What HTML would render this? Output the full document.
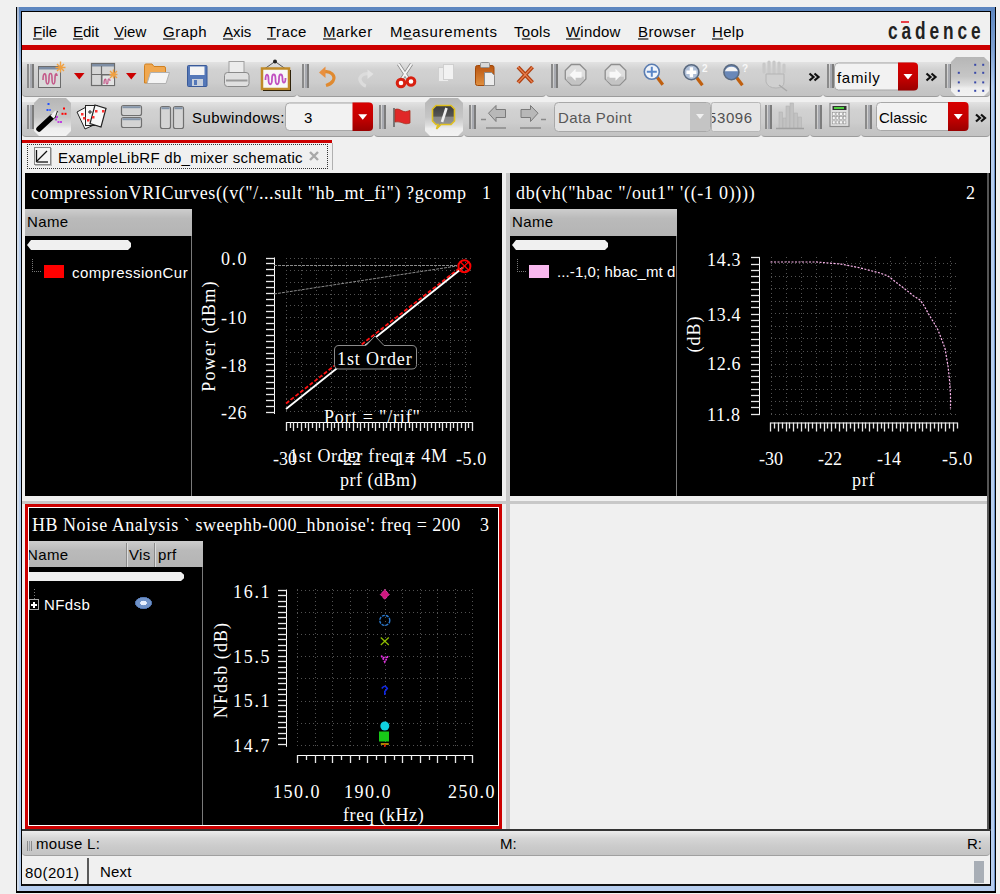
<!DOCTYPE html>
<html><head><meta charset="utf-8"><style>
html,body{margin:0;padding:0}
body{width:1000px;height:894px;background:#f0f0f0;position:relative;overflow:hidden}
div,span,svg{position:absolute}
.s{font-family:"Liberation Sans",sans-serif;white-space:pre}
.f{font-family:"Liberation Serif",serif;white-space:pre}
u{text-decoration:underline;text-decoration-color:#6a6a6a;text-underline-offset:1px;text-decoration-thickness:1.5px}
</style></head><body>
<div style="left:16px;top:7px;width:980px;height:886px;background:#000;"></div>
<div style="left:17px;top:7px;width:978px;height:884px;background:linear-gradient(#5b85bf 0px,#7fa2d2 40px,#b6cdee 80px,#b6cdee 100%);"></div>
<div style="left:17px;top:7px;width:2px;height:884px;background:linear-gradient(#a8b8d0 0px,#d0dae6 60px);"></div>
<div style="left:994px;top:40px;width:1px;height:851px;background:#6a90c8;"></div>
<div style="left:21px;top:11px;width:970px;height:875px;background:#000;"></div>
<div style="left:22px;top:12px;width:968px;height:873px;background:#f0f0f0;"></div>
<span class="s" style="left:33px;top:24px;font-size:15px;line-height:15px;"><u>F</u>ile</span>
<span class="s" style="left:73px;top:24px;font-size:15px;line-height:15px;"><u>E</u>dit</span>
<span class="s" style="left:114px;top:24px;font-size:15px;line-height:15px;"><u>V</u>iew</span>
<span class="s" style="left:163px;top:24px;font-size:15px;line-height:15px;letter-spacing:0.5px;"><u>G</u>raph</span>
<span class="s" style="left:223px;top:24px;font-size:15px;line-height:15px;"><u>A</u>xis</span>
<span class="s" style="left:267px;top:24px;font-size:15px;line-height:15px;letter-spacing:0.4px;"><u>T</u>race</span>
<span class="s" style="left:323px;top:24px;font-size:15px;line-height:15px;letter-spacing:0.5px;"><u>M</u>arker</span>
<span class="s" style="left:390px;top:24px;font-size:15px;line-height:15px;letter-spacing:0.7px;">M<u>e</u>asurements</span>
<span class="s" style="left:514px;top:24px;font-size:15px;line-height:15px;letter-spacing:0.3px;">T<u>o</u>ols</span>
<span class="s" style="left:566px;top:24px;font-size:15px;line-height:15px;letter-spacing:0.2px;"><u>W</u>indow</span>
<span class="s" style="left:638px;top:24px;font-size:15px;line-height:15px;letter-spacing:0.4px;"><u>B</u>rowser</span>
<span class="s" style="left:712px;top:24px;font-size:15px;line-height:15px;letter-spacing:0.3px;"><u>H</u>elp</span>
<div style="left:22px;top:45px;width:968px;height:5px;background:#cc0000;"></div>
<span class="s" style="left:888px;top:19px;font-size:24px;line-height:24px;font-weight:bold;letter-spacing:5.4px;color:#222;transform:scaleX(0.72);transform-origin:0 0;">cadence</span>
<div style="left:901px;top:21px;width:8px;height:1.5px;background:#e8404a;"></div>
<div style="left:22px;top:62px;width:275px;height:35px;background:linear-gradient(#e2e2e2 0%,#d2d2d2 22%,#cdcdcd 60%,#c6c6c6 78%,#c3c3c3 100%);border-bottom:1px solid #9c9c9c;box-sizing:border-box;border-radius:0 0 4px 4px;"></div>
<div style="left:297px;top:62px;width:249px;height:35px;background:linear-gradient(#e2e2e2 0%,#d2d2d2 22%,#cdcdcd 60%,#c6c6c6 78%,#c3c3c3 100%);border-bottom:1px solid #9c9c9c;box-sizing:border-box;border-radius:0 0 4px 4px;"></div>
<div style="left:546px;top:62px;width:277px;height:35px;background:linear-gradient(#e2e2e2 0%,#d2d2d2 22%,#cdcdcd 60%,#c6c6c6 78%,#c3c3c3 100%);border-bottom:1px solid #9c9c9c;box-sizing:border-box;border-radius:0 0 4px 4px;"></div>
<div style="left:823px;top:62px;width:117px;height:35px;background:linear-gradient(#e2e2e2 0%,#d2d2d2 22%,#cdcdcd 60%,#c6c6c6 78%,#c3c3c3 100%);border-bottom:1px solid #9c9c9c;box-sizing:border-box;border-radius:0 0 4px 4px;"></div>
<div style="left:940px;top:62px;width:50px;height:35px;background:linear-gradient(#e2e2e2 0%,#d2d2d2 22%,#cdcdcd 60%,#c6c6c6 78%,#c3c3c3 100%);border-bottom:1px solid #9c9c9c;box-sizing:border-box;border-radius:0 0 4px 4px;"></div>
<div style="left:27px;top:64px;width:2px;height:24px;background:#8a8a8a;"></div>
<div style="left:30px;top:64px;width:2px;height:24px;background:#a8aab0;"></div>
<div style="left:32px;top:64px;width:2px;height:24px;background:#7c7c7c;"></div>
<div style="left:302px;top:64px;width:2px;height:24px;background:#8a8a8a;"></div>
<div style="left:305px;top:64px;width:2px;height:24px;background:#a8aab0;"></div>
<div style="left:307px;top:64px;width:2px;height:24px;background:#7c7c7c;"></div>
<div style="left:551px;top:64px;width:2px;height:24px;background:#8a8a8a;"></div>
<div style="left:554px;top:64px;width:2px;height:24px;background:#a8aab0;"></div>
<div style="left:556px;top:64px;width:2px;height:24px;background:#7c7c7c;"></div>
<div style="left:827px;top:64px;width:2px;height:24px;background:#8a8a8a;"></div>
<div style="left:830px;top:64px;width:2px;height:24px;background:#a8aab0;"></div>
<div style="left:832px;top:64px;width:2px;height:24px;background:#7c7c7c;"></div>
<div style="left:945px;top:64px;width:2px;height:24px;background:#8a8a8a;"></div>
<div style="left:948px;top:64px;width:2px;height:24px;background:#a8aab0;"></div>
<div style="left:950px;top:64px;width:2px;height:24px;background:#7c7c7c;"></div>
<div style="left:22px;top:102px;width:352px;height:35px;background:linear-gradient(#e2e2e2 0%,#d2d2d2 22%,#cdcdcd 60%,#c6c6c6 78%,#c3c3c3 100%);border-bottom:1px solid #9c9c9c;box-sizing:border-box;border-radius:0 0 4px 4px;"></div>
<div style="left:374px;top:102px;width:90px;height:35px;background:linear-gradient(#e2e2e2 0%,#d2d2d2 22%,#cdcdcd 60%,#c6c6c6 78%,#c3c3c3 100%);border-bottom:1px solid #9c9c9c;box-sizing:border-box;border-radius:0 0 4px 4px;"></div>
<div style="left:464px;top:102px;width:297px;height:35px;background:linear-gradient(#e2e2e2 0%,#d2d2d2 22%,#cdcdcd 60%,#c6c6c6 78%,#c3c3c3 100%);border-bottom:1px solid #9c9c9c;box-sizing:border-box;border-radius:0 0 4px 4px;"></div>
<div style="left:761px;top:102px;width:49px;height:35px;background:linear-gradient(#e2e2e2 0%,#d2d2d2 22%,#cdcdcd 60%,#c6c6c6 78%,#c3c3c3 100%);border-bottom:1px solid #9c9c9c;box-sizing:border-box;border-radius:0 0 4px 4px;"></div>
<div style="left:810px;top:102px;width:51px;height:35px;background:linear-gradient(#e2e2e2 0%,#d2d2d2 22%,#cdcdcd 60%,#c6c6c6 78%,#c3c3c3 100%);border-bottom:1px solid #9c9c9c;box-sizing:border-box;border-radius:0 0 4px 4px;"></div>
<div style="left:861px;top:102px;width:129px;height:35px;background:linear-gradient(#e2e2e2 0%,#d2d2d2 22%,#cdcdcd 60%,#c6c6c6 78%,#c3c3c3 100%);border-bottom:1px solid #9c9c9c;box-sizing:border-box;border-radius:0 0 4px 4px;"></div>
<div style="left:27px;top:105px;width:2px;height:24px;background:#8a8a8a;"></div>
<div style="left:30px;top:105px;width:2px;height:24px;background:#a8aab0;"></div>
<div style="left:32px;top:105px;width:2px;height:24px;background:#7c7c7c;"></div>
<div style="left:379px;top:105px;width:2px;height:24px;background:#8a8a8a;"></div>
<div style="left:382px;top:105px;width:2px;height:24px;background:#a8aab0;"></div>
<div style="left:384px;top:105px;width:2px;height:24px;background:#7c7c7c;"></div>
<div style="left:469px;top:105px;width:2px;height:24px;background:#8a8a8a;"></div>
<div style="left:472px;top:105px;width:2px;height:24px;background:#a8aab0;"></div>
<div style="left:474px;top:105px;width:2px;height:24px;background:#7c7c7c;"></div>
<div style="left:765px;top:105px;width:2px;height:24px;background:#8a8a8a;"></div>
<div style="left:768px;top:105px;width:2px;height:24px;background:#a8aab0;"></div>
<div style="left:770px;top:105px;width:2px;height:24px;background:#7c7c7c;"></div>
<div style="left:815px;top:105px;width:2px;height:24px;background:#8a8a8a;"></div>
<div style="left:818px;top:105px;width:2px;height:24px;background:#a8aab0;"></div>
<div style="left:820px;top:105px;width:2px;height:24px;background:#7c7c7c;"></div>
<div style="left:865px;top:105px;width:2px;height:24px;background:#8a8a8a;"></div>
<div style="left:868px;top:105px;width:2px;height:24px;background:#a8aab0;"></div>
<div style="left:870px;top:105px;width:2px;height:24px;background:#7c7c7c;"></div>
<div style="left:22px;top:140px;width:310px;height:3px;background:#cc0000;"></div>
<div style="left:27px;top:144px;width:301px;height:25px;background:transparent;border:1px dotted #333;box-sizing:border-box;"></div>
<div style="left:332px;top:143px;width:1px;height:27px;background:#b0b0b0;"></div>
<span class="s" style="left:58px;top:150px;font-size:15px;line-height:15px;letter-spacing:0.29px;">ExampleLibRF db_mixer schematic</span>
<div style="left:22px;top:170px;width:968px;height:659px;background:#f0f0f0;"></div>
<div style="left:25px;top:173px;width:477px;height:323px;background:#000;"></div>
<div style="left:506px;top:173px;width:4px;height:656px;background:#c8c8c8;"></div>
<div style="left:510px;top:173px;width:477px;height:323px;background:#000;"></div>
<div style="left:987px;top:173px;width:2px;height:656px;background:#555;"></div>
<div style="left:989px;top:173px;width:2px;height:656px;background:#000;"></div>
<div style="left:22px;top:501px;width:965px;height:3px;background:#c8c8c8;"></div>
<div style="left:25px;top:504px;width:477px;height:325px;background:#cc0000;"></div>
<div style="left:28px;top:507px;width:471px;height:319px;background:#fff;"></div>
<div style="left:29px;top:508px;width:469px;height:317px;background:#000;"></div>
<div style="left:510px;top:504px;width:477px;height:325px;background:#f0f0f0;"></div>
<div style="left:22px;top:829px;width:969px;height:2px;background:#333;"></div>
<div style="left:22px;top:831px;width:968px;height:25px;background:linear-gradient(#ececec 0%,#d6d6d6 30%,#cccccc 60%,#c4c4c4 100%);border-bottom:1px solid #a0a0a0;box-sizing:border-box;border-radius:0 0 4px 4px;"></div>
<div style="left:27px;top:841px;width:1px;height:10px;background:#8a8a8a;"></div>
<div style="left:29px;top:841px;width:1px;height:10px;background:#9aa0a8;"></div>
<div style="left:31px;top:841px;width:1px;height:10px;background:#8a8a8a;"></div>
<span class="s" style="left:36px;top:836px;font-size:15px;line-height:15px;letter-spacing:0.3px;">mouse L:</span>
<span class="s" style="left:500px;top:836px;font-size:15px;line-height:15px;">M:</span>
<span class="s" style="left:967px;top:836px;font-size:15px;line-height:15px;">R:</span>
<div style="left:22px;top:856px;width:968px;height:29px;background:#f0f0f0;"></div>
<span class="s" style="left:25px;top:865px;font-size:15px;line-height:15px;letter-spacing:0.4px;">80(201)</span>
<div style="left:87px;top:858px;width:2px;height:26px;background:#5a5a5a;"></div>
<span class="s" style="left:100px;top:864px;font-size:15px;line-height:15px;letter-spacing:0.2px;">Next</span>
<div style="left:974px;top:861px;width:10px;height:22px;background:#a8aeb6;"></div>
<div style="left:22px;top:884px;width:969px;height:2px;background:#111;"></div>
<span class="f" style="left:31px;top:184px;font-size:18px;line-height:18px;color:#fff;letter-spacing:0.6px;">compressionVRICurves((v(&quot;/...sult &quot;hb_mt_fi&quot;) ?gcomp</span>
<span class="f" style="left:482px;top:184px;font-size:18px;line-height:18px;color:#fff;">1</span>
<div style="left:25px;top:209px;width:167px;height:27px;background:linear-gradient(#cdcdcd 0%,#bababa 35%,#b4b4b4 100%);"></div>
<span class="s" style="left:27px;top:214px;font-size:15px;line-height:15px;letter-spacing:0.4px;">Name</span>
<div style="left:191px;top:236px;width:1px;height:260px;background:#7a7a7a;"></div>
<div style="left:27px;top:240px;width:104px;height:10px;background:#f0f0f0;clip-path:polygon(0 50%,4px 0,calc(100% - 3px) 0,100% 30%,100% 70%,calc(100% - 3px) 100%,4px 100%);"></div>
<div style="left:32px;top:259px;width:1px;height:13px;background:repeating-linear-gradient(#777 0 1px,transparent 1px 2px);"></div>
<div style="left:32px;top:271px;width:10px;height:1px;background:repeating-linear-gradient(90deg,#777 0 1px,transparent 1px 2px);"></div>
<div style="left:44px;top:265px;width:20px;height:13px;background:#ff0000;"></div>
<span class="s" style="left:72px;top:265px;font-size:15px;line-height:15px;color:#fff;letter-spacing:0.5px;">compressionCur</span>
<span class="f" style="left:516px;top:184px;font-size:18px;line-height:18px;color:#fff;letter-spacing:0.7px;">db(vh(&quot;hbac &quot;/out1&quot; &#39;((-1 0))))</span>
<span class="f" style="left:966px;top:184px;font-size:18px;line-height:18px;color:#fff;">2</span>
<div style="left:510px;top:209px;width:167px;height:27px;background:linear-gradient(#cdcdcd 0%,#bababa 35%,#b4b4b4 100%);"></div>
<span class="s" style="left:512px;top:214px;font-size:15px;line-height:15px;letter-spacing:0.4px;">Name</span>
<div style="left:676px;top:236px;width:1px;height:260px;background:#7a7a7a;"></div>
<div style="left:512px;top:240px;width:96px;height:10px;background:#f0f0f0;clip-path:polygon(0 50%,4px 0,calc(100% - 3px) 0,100% 30%,100% 70%,calc(100% - 3px) 100%,4px 100%);"></div>
<div style="left:517px;top:259px;width:1px;height:13px;background:repeating-linear-gradient(#777 0 1px,transparent 1px 2px);"></div>
<div style="left:517px;top:271px;width:10px;height:1px;background:repeating-linear-gradient(90deg,#777 0 1px,transparent 1px 2px);"></div>
<div style="left:529px;top:265px;width:20px;height:13px;background:#f8b8ee;"></div>
<div style="left:510px;top:236px;width:166px;height:60px;overflow:hidden">
<span class="s" style="left:47px;top:28px;font-size:15px;line-height:15px;color:#fff;letter-spacing:0.1px;">...-1,0; hbac_mt d</span>
</div>
<span class="f" style="left:32px;top:516px;font-size:18px;line-height:18px;color:#fff;letter-spacing:0.52px;">HB Noise Analysis ` sweephb-000_hbnoise&#39;: freq = 200</span>
<span class="f" style="left:480px;top:516px;font-size:18px;line-height:18px;color:#fff;">3</span>
<div style="left:29px;top:541px;width:174px;height:26px;background:linear-gradient(#cdcdcd 0%,#bababa 35%,#b4b4b4 100%);"></div>
<div style="left:126px;top:543px;width:1px;height:24px;background:#8a8a8a;"></div>
<div style="left:127px;top:543px;width:1px;height:24px;background:#dcdcdc;"></div>
<div style="left:154px;top:543px;width:1px;height:24px;background:#8a8a8a;"></div>
<div style="left:155px;top:543px;width:1px;height:24px;background:#dcdcdc;"></div>
<div style="left:29px;top:541px;width:97px;height:26px;overflow:hidden">
<span class="s" style="left:-2px;top:6px;font-size:15px;line-height:15px;letter-spacing:0.4px;">Name</span>
</div>
<span class="s" style="left:129px;top:547px;font-size:15px;line-height:15px;letter-spacing:0.3px;">Vis</span>
<span class="s" style="left:158px;top:547px;font-size:15px;line-height:15px;letter-spacing:0.3px;">prf</span>
<div style="left:202px;top:567px;width:1px;height:258px;background:#7a7a7a;"></div>
<div style="left:29px;top:572px;width:155px;height:9px;background:#f0f0f0;clip-path:polygon(0 0,calc(100% - 3px) 0,100% 30%,100% 70%,calc(100% - 3px) 100%,0 100%);"></div>
<div style="left:34px;top:589px;width:1px;height:10px;background:repeating-linear-gradient(#777 0 1px,transparent 1px 3px);"></div>
<div style="left:29px;top:599px;width:10px;height:11px;background:transparent;border:1px solid #aaa;box-sizing:border-box;"></div>
<div style="left:31px;top:603.5px;width:6px;height:2.0px;background:#fff;"></div>
<div style="left:33px;top:601.5px;width:2px;height:6.0px;background:#fff;"></div>
<span class="s" style="left:44px;top:597px;font-size:15px;line-height:15px;color:#fff;letter-spacing:0.4px;">NFdsb</span>
<div style="left:135px;top:597px;width:17px;height:12px;background:radial-gradient(ellipse at center,#e8f0ff 0 25%,#6f92c8 30% 60%,#3e5f98 70%,transparent 72%);"></div>
<span class="s" style="left:702px;top:64px;font-size:10px;line-height:10px;color:#f8f8f8;font-weight:bold;">2</span>
<span class="s" style="left:742px;top:64px;font-size:10px;line-height:10px;color:#f8f8f8;font-weight:bold;">?</span>
<svg style="left:0;top:0" width="1000" height="894" viewBox="0 0 1000 894"><line x1="286.5" y1="258" x2="286.5" y2="414" stroke="#525252" stroke-width="1" stroke-dasharray="1 3"/><line x1="301.5" y1="258" x2="301.5" y2="414" stroke="#525252" stroke-width="1" stroke-dasharray="1 3"/><line x1="316.5" y1="258" x2="316.5" y2="414" stroke="#525252" stroke-width="1" stroke-dasharray="1 3"/><line x1="331.5" y1="258" x2="331.5" y2="414" stroke="#525252" stroke-width="1" stroke-dasharray="1 3"/><line x1="346.5" y1="258" x2="346.5" y2="414" stroke="#525252" stroke-width="1" stroke-dasharray="1 3"/><line x1="360.5" y1="258" x2="360.5" y2="414" stroke="#525252" stroke-width="1" stroke-dasharray="1 3"/><line x1="375.5" y1="258" x2="375.5" y2="414" stroke="#525252" stroke-width="1" stroke-dasharray="1 3"/><line x1="390.5" y1="258" x2="390.5" y2="414" stroke="#525252" stroke-width="1" stroke-dasharray="1 3"/><line x1="405.5" y1="258" x2="405.5" y2="414" stroke="#525252" stroke-width="1" stroke-dasharray="1 3"/><line x1="420.5" y1="258" x2="420.5" y2="414" stroke="#525252" stroke-width="1" stroke-dasharray="1 3"/><line x1="435.5" y1="258" x2="435.5" y2="414" stroke="#525252" stroke-width="1" stroke-dasharray="1 3"/><line x1="450.5" y1="258" x2="450.5" y2="414" stroke="#525252" stroke-width="1" stroke-dasharray="1 3"/><line x1="465.5" y1="258" x2="465.5" y2="414" stroke="#525252" stroke-width="1" stroke-dasharray="1 3"/><line x1="286" y1="258.5" x2="473" y2="258.5" stroke="#525252" stroke-width="1" stroke-dasharray="1 3"/><line x1="286" y1="270.5" x2="473" y2="270.5" stroke="#525252" stroke-width="1" stroke-dasharray="1 3"/><line x1="286" y1="282.5" x2="473" y2="282.5" stroke="#525252" stroke-width="1" stroke-dasharray="1 3"/><line x1="286" y1="294.5" x2="473" y2="294.5" stroke="#525252" stroke-width="1" stroke-dasharray="1 3"/><line x1="286" y1="305.5" x2="473" y2="305.5" stroke="#525252" stroke-width="1" stroke-dasharray="1 3"/><line x1="286" y1="317.5" x2="473" y2="317.5" stroke="#525252" stroke-width="1" stroke-dasharray="1 3"/><line x1="286" y1="329.5" x2="473" y2="329.5" stroke="#525252" stroke-width="1" stroke-dasharray="1 3"/><line x1="286" y1="340.5" x2="473" y2="340.5" stroke="#525252" stroke-width="1" stroke-dasharray="1 3"/><line x1="286" y1="352.5" x2="473" y2="352.5" stroke="#525252" stroke-width="1" stroke-dasharray="1 3"/><line x1="286" y1="364.5" x2="473" y2="364.5" stroke="#525252" stroke-width="1" stroke-dasharray="1 3"/><line x1="286" y1="376.5" x2="473" y2="376.5" stroke="#525252" stroke-width="1" stroke-dasharray="1 3"/><line x1="286" y1="387.5" x2="473" y2="387.5" stroke="#525252" stroke-width="1" stroke-dasharray="1 3"/><line x1="286" y1="399.5" x2="473" y2="399.5" stroke="#525252" stroke-width="1" stroke-dasharray="1 3"/><line x1="286" y1="411.5" x2="473" y2="411.5" stroke="#525252" stroke-width="1" stroke-dasharray="1 3"/><line x1="274.5" y1="257.5" x2="274.5" y2="414" stroke="#fff" stroke-width="1" /><line x1="266" y1="258.5" x2="275" y2="258.5" stroke="#e8e8e8" stroke-width="1.3" /><line x1="266" y1="263.5" x2="275" y2="263.5" stroke="#e8e8e8" stroke-width="1.3" /><line x1="266" y1="269.5" x2="275" y2="269.5" stroke="#e8e8e8" stroke-width="1.3" /><line x1="266" y1="275.5" x2="275" y2="275.5" stroke="#e8e8e8" stroke-width="1.3" /><line x1="266" y1="281.5" x2="275" y2="281.5" stroke="#e8e8e8" stroke-width="1.3" /><line x1="266" y1="287.5" x2="275" y2="287.5" stroke="#e8e8e8" stroke-width="1.3" /><line x1="266" y1="293.5" x2="275" y2="293.5" stroke="#e8e8e8" stroke-width="1.3" /><line x1="266" y1="299.5" x2="275" y2="299.5" stroke="#e8e8e8" stroke-width="1.3" /><line x1="266" y1="305.5" x2="275" y2="305.5" stroke="#e8e8e8" stroke-width="1.3" /><line x1="266" y1="311.5" x2="275" y2="311.5" stroke="#e8e8e8" stroke-width="1.3" /><line x1="266" y1="317.5" x2="275" y2="317.5" stroke="#e8e8e8" stroke-width="1.3" /><line x1="266" y1="323.5" x2="275" y2="323.5" stroke="#e8e8e8" stroke-width="1.3" /><line x1="266" y1="329.5" x2="275" y2="329.5" stroke="#e8e8e8" stroke-width="1.3" /><line x1="266" y1="335.5" x2="275" y2="335.5" stroke="#e8e8e8" stroke-width="1.3" /><line x1="266" y1="341.5" x2="275" y2="341.5" stroke="#e8e8e8" stroke-width="1.3" /><line x1="266" y1="347.5" x2="275" y2="347.5" stroke="#e8e8e8" stroke-width="1.3" /><line x1="266" y1="353.5" x2="275" y2="353.5" stroke="#e8e8e8" stroke-width="1.3" /><line x1="266" y1="358.5" x2="275" y2="358.5" stroke="#e8e8e8" stroke-width="1.3" /><line x1="266" y1="364.5" x2="275" y2="364.5" stroke="#e8e8e8" stroke-width="1.3" /><line x1="266" y1="370.5" x2="275" y2="370.5" stroke="#e8e8e8" stroke-width="1.3" /><line x1="266" y1="376.5" x2="275" y2="376.5" stroke="#e8e8e8" stroke-width="1.3" /><line x1="266" y1="382.5" x2="275" y2="382.5" stroke="#e8e8e8" stroke-width="1.3" /><line x1="266" y1="388.5" x2="275" y2="388.5" stroke="#e8e8e8" stroke-width="1.3" /><line x1="266" y1="394.5" x2="275" y2="394.5" stroke="#e8e8e8" stroke-width="1.3" /><line x1="266" y1="400.5" x2="275" y2="400.5" stroke="#e8e8e8" stroke-width="1.3" /><line x1="266" y1="406.5" x2="275" y2="406.5" stroke="#e8e8e8" stroke-width="1.3" /><line x1="266" y1="412.5" x2="275" y2="412.5" stroke="#e8e8e8" stroke-width="1.3" /><line x1="286" y1="422.5" x2="472" y2="422.5" stroke="#fff" stroke-width="1" /><line x1="286.5" y1="422" x2="286.5" y2="431" stroke="#e8e8e8" stroke-width="1.3" /><line x1="290.5" y1="422" x2="290.5" y2="428" stroke="#e8e8e8" stroke-width="1.3" /><line x1="293.5" y1="422" x2="293.5" y2="431" stroke="#e8e8e8" stroke-width="1.3" /><line x1="297.5" y1="422" x2="297.5" y2="428" stroke="#e8e8e8" stroke-width="1.3" /><line x1="301.5" y1="422" x2="301.5" y2="431" stroke="#e8e8e8" stroke-width="1.3" /><line x1="305.5" y1="422" x2="305.5" y2="428" stroke="#e8e8e8" stroke-width="1.3" /><line x1="308.5" y1="422" x2="308.5" y2="431" stroke="#e8e8e8" stroke-width="1.3" /><line x1="312.5" y1="422" x2="312.5" y2="428" stroke="#e8e8e8" stroke-width="1.3" /><line x1="316.5" y1="422" x2="316.5" y2="431" stroke="#e8e8e8" stroke-width="1.3" /><line x1="319.5" y1="422" x2="319.5" y2="428" stroke="#e8e8e8" stroke-width="1.3" /><line x1="323.5" y1="422" x2="323.5" y2="431" stroke="#e8e8e8" stroke-width="1.3" /><line x1="327.5" y1="422" x2="327.5" y2="428" stroke="#e8e8e8" stroke-width="1.3" /><line x1="331.5" y1="422" x2="331.5" y2="431" stroke="#e8e8e8" stroke-width="1.3" /><line x1="334.5" y1="422" x2="334.5" y2="428" stroke="#e8e8e8" stroke-width="1.3" /><line x1="338.5" y1="422" x2="338.5" y2="431" stroke="#e8e8e8" stroke-width="1.3" /><line x1="342.5" y1="422" x2="342.5" y2="428" stroke="#e8e8e8" stroke-width="1.3" /><line x1="346.5" y1="422" x2="346.5" y2="431" stroke="#e8e8e8" stroke-width="1.3" /><line x1="349.5" y1="422" x2="349.5" y2="428" stroke="#e8e8e8" stroke-width="1.3" /><line x1="353.5" y1="422" x2="353.5" y2="431" stroke="#e8e8e8" stroke-width="1.3" /><line x1="357.5" y1="422" x2="357.5" y2="428" stroke="#e8e8e8" stroke-width="1.3" /><line x1="360.5" y1="422" x2="360.5" y2="431" stroke="#e8e8e8" stroke-width="1.3" /><line x1="364.5" y1="422" x2="364.5" y2="428" stroke="#e8e8e8" stroke-width="1.3" /><line x1="368.5" y1="422" x2="368.5" y2="431" stroke="#e8e8e8" stroke-width="1.3" /><line x1="372.5" y1="422" x2="372.5" y2="428" stroke="#e8e8e8" stroke-width="1.3" /><line x1="375.5" y1="422" x2="375.5" y2="431" stroke="#e8e8e8" stroke-width="1.3" /><line x1="379.5" y1="422" x2="379.5" y2="428" stroke="#e8e8e8" stroke-width="1.3" /><line x1="383.5" y1="422" x2="383.5" y2="431" stroke="#e8e8e8" stroke-width="1.3" /><line x1="386.5" y1="422" x2="386.5" y2="428" stroke="#e8e8e8" stroke-width="1.3" /><line x1="390.5" y1="422" x2="390.5" y2="431" stroke="#e8e8e8" stroke-width="1.3" /><line x1="394.5" y1="422" x2="394.5" y2="428" stroke="#e8e8e8" stroke-width="1.3" /><line x1="398.5" y1="422" x2="398.5" y2="431" stroke="#e8e8e8" stroke-width="1.3" /><line x1="401.5" y1="422" x2="401.5" y2="428" stroke="#e8e8e8" stroke-width="1.3" /><line x1="405.5" y1="422" x2="405.5" y2="431" stroke="#e8e8e8" stroke-width="1.3" /><line x1="409.5" y1="422" x2="409.5" y2="428" stroke="#e8e8e8" stroke-width="1.3" /><line x1="412.5" y1="422" x2="412.5" y2="431" stroke="#e8e8e8" stroke-width="1.3" /><line x1="416.5" y1="422" x2="416.5" y2="428" stroke="#e8e8e8" stroke-width="1.3" /><line x1="420.5" y1="422" x2="420.5" y2="431" stroke="#e8e8e8" stroke-width="1.3" /><line x1="424.5" y1="422" x2="424.5" y2="428" stroke="#e8e8e8" stroke-width="1.3" /><line x1="427.5" y1="422" x2="427.5" y2="431" stroke="#e8e8e8" stroke-width="1.3" /><line x1="431.5" y1="422" x2="431.5" y2="428" stroke="#e8e8e8" stroke-width="1.3" /><line x1="435.5" y1="422" x2="435.5" y2="431" stroke="#e8e8e8" stroke-width="1.3" /><line x1="439.5" y1="422" x2="439.5" y2="428" stroke="#e8e8e8" stroke-width="1.3" /><line x1="442.5" y1="422" x2="442.5" y2="431" stroke="#e8e8e8" stroke-width="1.3" /><line x1="446.5" y1="422" x2="446.5" y2="428" stroke="#e8e8e8" stroke-width="1.3" /><line x1="450.5" y1="422" x2="450.5" y2="431" stroke="#e8e8e8" stroke-width="1.3" /><line x1="453.5" y1="422" x2="453.5" y2="428" stroke="#e8e8e8" stroke-width="1.3" /><line x1="457.5" y1="422" x2="457.5" y2="431" stroke="#e8e8e8" stroke-width="1.3" /><line x1="461.5" y1="422" x2="461.5" y2="428" stroke="#e8e8e8" stroke-width="1.3" /><line x1="465.5" y1="422" x2="465.5" y2="431" stroke="#e8e8e8" stroke-width="1.3" /><line x1="468.5" y1="422" x2="468.5" y2="428" stroke="#e8e8e8" stroke-width="1.3" /><line x1="472.5" y1="422" x2="472.5" y2="431" stroke="#e8e8e8" stroke-width="1.3" /><line x1="274" y1="265.5" x2="457" y2="265.5" stroke="#8a8a8a" stroke-width="1" stroke-dasharray="3 1"/><line x1="274" y1="294" x2="457" y2="266" stroke="#8a8a8a" stroke-width="1" stroke-dasharray="3 1"/><line x1="286" y1="403.5" x2="459" y2="268.5" stroke="#ff1010" stroke-width="1.8" stroke-dasharray="4 2"/><line x1="286" y1="409" x2="463" y2="267.5" stroke="#ffffff" stroke-width="1.8" /><circle cx="464.4" cy="266.2" r="6" fill="none" stroke="#ff0000" stroke-width="2"/><line x1="460.5" y1="262" x2="468.5" y2="270" stroke="#ff0000" stroke-width="1.3" /><line x1="468.5" y1="262" x2="460.5" y2="270" stroke="#ff0000" stroke-width="1.3" /><path d="M339,345.5 L366,345.5 L375,336 L384,345.5 L412,345.5 Q416.5,345.5 416.5,350 L416.5,364.5 Q416.5,369 412,369 L339,369 Q334.5,369 334.5,364.5 L334.5,350 Q334.5,345.5 339,345.5 Z" fill="#000" stroke="#8c8c8c" stroke-width="1"/><line x1="771.5" y1="257" x2="771.5" y2="415" stroke="#525252" stroke-width="1" stroke-dasharray="1 3"/><line x1="786.5" y1="257" x2="786.5" y2="415" stroke="#525252" stroke-width="1" stroke-dasharray="1 3"/><line x1="801.5" y1="257" x2="801.5" y2="415" stroke="#525252" stroke-width="1" stroke-dasharray="1 3"/><line x1="816.5" y1="257" x2="816.5" y2="415" stroke="#525252" stroke-width="1" stroke-dasharray="1 3"/><line x1="831.5" y1="257" x2="831.5" y2="415" stroke="#525252" stroke-width="1" stroke-dasharray="1 3"/><line x1="846.5" y1="257" x2="846.5" y2="415" stroke="#525252" stroke-width="1" stroke-dasharray="1 3"/><line x1="860.5" y1="257" x2="860.5" y2="415" stroke="#525252" stroke-width="1" stroke-dasharray="1 3"/><line x1="875.5" y1="257" x2="875.5" y2="415" stroke="#525252" stroke-width="1" stroke-dasharray="1 3"/><line x1="890.5" y1="257" x2="890.5" y2="415" stroke="#525252" stroke-width="1" stroke-dasharray="1 3"/><line x1="905.5" y1="257" x2="905.5" y2="415" stroke="#525252" stroke-width="1" stroke-dasharray="1 3"/><line x1="920.5" y1="257" x2="920.5" y2="415" stroke="#525252" stroke-width="1" stroke-dasharray="1 3"/><line x1="935.5" y1="257" x2="935.5" y2="415" stroke="#525252" stroke-width="1" stroke-dasharray="1 3"/><line x1="950.5" y1="257" x2="950.5" y2="415" stroke="#525252" stroke-width="1" stroke-dasharray="1 3"/><line x1="771" y1="263.5" x2="957" y2="263.5" stroke="#525252" stroke-width="1" stroke-dasharray="1 3"/><line x1="771" y1="276.5" x2="957" y2="276.5" stroke="#525252" stroke-width="1" stroke-dasharray="1 3"/><line x1="771" y1="288.5" x2="957" y2="288.5" stroke="#525252" stroke-width="1" stroke-dasharray="1 3"/><line x1="771" y1="301.5" x2="957" y2="301.5" stroke="#525252" stroke-width="1" stroke-dasharray="1 3"/><line x1="771" y1="313.5" x2="957" y2="313.5" stroke="#525252" stroke-width="1" stroke-dasharray="1 3"/><line x1="771" y1="326.5" x2="957" y2="326.5" stroke="#525252" stroke-width="1" stroke-dasharray="1 3"/><line x1="771" y1="338.5" x2="957" y2="338.5" stroke="#525252" stroke-width="1" stroke-dasharray="1 3"/><line x1="771" y1="351.5" x2="957" y2="351.5" stroke="#525252" stroke-width="1" stroke-dasharray="1 3"/><line x1="771" y1="364.5" x2="957" y2="364.5" stroke="#525252" stroke-width="1" stroke-dasharray="1 3"/><line x1="771" y1="376.5" x2="957" y2="376.5" stroke="#525252" stroke-width="1" stroke-dasharray="1 3"/><line x1="771" y1="389.5" x2="957" y2="389.5" stroke="#525252" stroke-width="1" stroke-dasharray="1 3"/><line x1="771" y1="401.5" x2="957" y2="401.5" stroke="#525252" stroke-width="1" stroke-dasharray="1 3"/><line x1="771" y1="414.5" x2="957" y2="414.5" stroke="#525252" stroke-width="1" stroke-dasharray="1 3"/><line x1="759.5" y1="257.4" x2="759.5" y2="414.7" stroke="#fff" stroke-width="1" /><line x1="751" y1="257.5" x2="760" y2="257.5" stroke="#e8e8e8" stroke-width="1.3" /><line x1="751" y1="264.5" x2="760" y2="264.5" stroke="#e8e8e8" stroke-width="1.3" /><line x1="751" y1="270.5" x2="760" y2="270.5" stroke="#e8e8e8" stroke-width="1.3" /><line x1="751" y1="276.5" x2="760" y2="276.5" stroke="#e8e8e8" stroke-width="1.3" /><line x1="751" y1="282.5" x2="760" y2="282.5" stroke="#e8e8e8" stroke-width="1.3" /><line x1="751" y1="289.5" x2="760" y2="289.5" stroke="#e8e8e8" stroke-width="1.3" /><line x1="751" y1="295.5" x2="760" y2="295.5" stroke="#e8e8e8" stroke-width="1.3" /><line x1="751" y1="301.5" x2="760" y2="301.5" stroke="#e8e8e8" stroke-width="1.3" /><line x1="751" y1="307.5" x2="760" y2="307.5" stroke="#e8e8e8" stroke-width="1.3" /><line x1="751" y1="314.5" x2="760" y2="314.5" stroke="#e8e8e8" stroke-width="1.3" /><line x1="751" y1="320.5" x2="760" y2="320.5" stroke="#e8e8e8" stroke-width="1.3" /><line x1="751" y1="326.5" x2="760" y2="326.5" stroke="#e8e8e8" stroke-width="1.3" /><line x1="751" y1="332.5" x2="760" y2="332.5" stroke="#e8e8e8" stroke-width="1.3" /><line x1="751" y1="339.5" x2="760" y2="339.5" stroke="#e8e8e8" stroke-width="1.3" /><line x1="751" y1="345.5" x2="760" y2="345.5" stroke="#e8e8e8" stroke-width="1.3" /><line x1="751" y1="351.5" x2="760" y2="351.5" stroke="#e8e8e8" stroke-width="1.3" /><line x1="751" y1="357.5" x2="760" y2="357.5" stroke="#e8e8e8" stroke-width="1.3" /><line x1="751" y1="364.5" x2="760" y2="364.5" stroke="#e8e8e8" stroke-width="1.3" /><line x1="751" y1="370.5" x2="760" y2="370.5" stroke="#e8e8e8" stroke-width="1.3" /><line x1="751" y1="376.5" x2="760" y2="376.5" stroke="#e8e8e8" stroke-width="1.3" /><line x1="751" y1="382.5" x2="760" y2="382.5" stroke="#e8e8e8" stroke-width="1.3" /><line x1="751" y1="389.5" x2="760" y2="389.5" stroke="#e8e8e8" stroke-width="1.3" /><line x1="751" y1="395.5" x2="760" y2="395.5" stroke="#e8e8e8" stroke-width="1.3" /><line x1="751" y1="401.5" x2="760" y2="401.5" stroke="#e8e8e8" stroke-width="1.3" /><line x1="751" y1="407.5" x2="760" y2="407.5" stroke="#e8e8e8" stroke-width="1.3" /><line x1="751" y1="414.5" x2="760" y2="414.5" stroke="#e8e8e8" stroke-width="1.3" /><line x1="770.5" y1="423.0" x2="957.4" y2="423.0" stroke="#fff" stroke-width="1" /><line x1="770.5" y1="422.5" x2="770.5" y2="431.5" stroke="#e8e8e8" stroke-width="1.3" /><line x1="774.5" y1="422.5" x2="774.5" y2="428.5" stroke="#e8e8e8" stroke-width="1.3" /><line x1="778.5" y1="422.5" x2="778.5" y2="431.5" stroke="#e8e8e8" stroke-width="1.3" /><line x1="782.5" y1="422.5" x2="782.5" y2="428.5" stroke="#e8e8e8" stroke-width="1.3" /><line x1="786.5" y1="422.5" x2="786.5" y2="431.5" stroke="#e8e8e8" stroke-width="1.3" /><line x1="789.5" y1="422.5" x2="789.5" y2="428.5" stroke="#e8e8e8" stroke-width="1.3" /><line x1="793.5" y1="422.5" x2="793.5" y2="431.5" stroke="#e8e8e8" stroke-width="1.3" /><line x1="797.5" y1="422.5" x2="797.5" y2="428.5" stroke="#e8e8e8" stroke-width="1.3" /><line x1="801.5" y1="422.5" x2="801.5" y2="431.5" stroke="#e8e8e8" stroke-width="1.3" /><line x1="805.5" y1="422.5" x2="805.5" y2="428.5" stroke="#e8e8e8" stroke-width="1.3" /><line x1="808.5" y1="422.5" x2="808.5" y2="431.5" stroke="#e8e8e8" stroke-width="1.3" /><line x1="812.5" y1="422.5" x2="812.5" y2="428.5" stroke="#e8e8e8" stroke-width="1.3" /><line x1="816.5" y1="422.5" x2="816.5" y2="431.5" stroke="#e8e8e8" stroke-width="1.3" /><line x1="820.5" y1="422.5" x2="820.5" y2="428.5" stroke="#e8e8e8" stroke-width="1.3" /><line x1="824.5" y1="422.5" x2="824.5" y2="431.5" stroke="#e8e8e8" stroke-width="1.3" /><line x1="827.5" y1="422.5" x2="827.5" y2="428.5" stroke="#e8e8e8" stroke-width="1.3" /><line x1="831.5" y1="422.5" x2="831.5" y2="431.5" stroke="#e8e8e8" stroke-width="1.3" /><line x1="835.5" y1="422.5" x2="835.5" y2="428.5" stroke="#e8e8e8" stroke-width="1.3" /><line x1="839.5" y1="422.5" x2="839.5" y2="431.5" stroke="#e8e8e8" stroke-width="1.3" /><line x1="843.5" y1="422.5" x2="843.5" y2="428.5" stroke="#e8e8e8" stroke-width="1.3" /><line x1="846.5" y1="422.5" x2="846.5" y2="431.5" stroke="#e8e8e8" stroke-width="1.3" /><line x1="850.5" y1="422.5" x2="850.5" y2="428.5" stroke="#e8e8e8" stroke-width="1.3" /><line x1="854.5" y1="422.5" x2="854.5" y2="431.5" stroke="#e8e8e8" stroke-width="1.3" /><line x1="858.5" y1="422.5" x2="858.5" y2="428.5" stroke="#e8e8e8" stroke-width="1.3" /><line x1="862.5" y1="422.5" x2="862.5" y2="431.5" stroke="#e8e8e8" stroke-width="1.3" /><line x1="865.5" y1="422.5" x2="865.5" y2="428.5" stroke="#e8e8e8" stroke-width="1.3" /><line x1="869.5" y1="422.5" x2="869.5" y2="431.5" stroke="#e8e8e8" stroke-width="1.3" /><line x1="873.5" y1="422.5" x2="873.5" y2="428.5" stroke="#e8e8e8" stroke-width="1.3" /><line x1="877.5" y1="422.5" x2="877.5" y2="431.5" stroke="#e8e8e8" stroke-width="1.3" /><line x1="881.5" y1="422.5" x2="881.5" y2="428.5" stroke="#e8e8e8" stroke-width="1.3" /><line x1="884.5" y1="422.5" x2="884.5" y2="431.5" stroke="#e8e8e8" stroke-width="1.3" /><line x1="888.5" y1="422.5" x2="888.5" y2="428.5" stroke="#e8e8e8" stroke-width="1.3" /><line x1="892.5" y1="422.5" x2="892.5" y2="431.5" stroke="#e8e8e8" stroke-width="1.3" /><line x1="896.5" y1="422.5" x2="896.5" y2="428.5" stroke="#e8e8e8" stroke-width="1.3" /><line x1="900.5" y1="422.5" x2="900.5" y2="431.5" stroke="#e8e8e8" stroke-width="1.3" /><line x1="903.5" y1="422.5" x2="903.5" y2="428.5" stroke="#e8e8e8" stroke-width="1.3" /><line x1="907.5" y1="422.5" x2="907.5" y2="431.5" stroke="#e8e8e8" stroke-width="1.3" /><line x1="911.5" y1="422.5" x2="911.5" y2="428.5" stroke="#e8e8e8" stroke-width="1.3" /><line x1="915.5" y1="422.5" x2="915.5" y2="431.5" stroke="#e8e8e8" stroke-width="1.3" /><line x1="919.5" y1="422.5" x2="919.5" y2="428.5" stroke="#e8e8e8" stroke-width="1.3" /><line x1="922.5" y1="422.5" x2="922.5" y2="431.5" stroke="#e8e8e8" stroke-width="1.3" /><line x1="926.5" y1="422.5" x2="926.5" y2="428.5" stroke="#e8e8e8" stroke-width="1.3" /><line x1="930.5" y1="422.5" x2="930.5" y2="431.5" stroke="#e8e8e8" stroke-width="1.3" /><line x1="934.5" y1="422.5" x2="934.5" y2="428.5" stroke="#e8e8e8" stroke-width="1.3" /><line x1="938.5" y1="422.5" x2="938.5" y2="431.5" stroke="#e8e8e8" stroke-width="1.3" /><line x1="941.5" y1="422.5" x2="941.5" y2="428.5" stroke="#e8e8e8" stroke-width="1.3" /><line x1="945.5" y1="422.5" x2="945.5" y2="431.5" stroke="#e8e8e8" stroke-width="1.3" /><line x1="949.5" y1="422.5" x2="949.5" y2="428.5" stroke="#e8e8e8" stroke-width="1.3" /><line x1="953.5" y1="422.5" x2="953.5" y2="431.5" stroke="#e8e8e8" stroke-width="1.3" /><line x1="957.5" y1="422.5" x2="957.5" y2="428.5" stroke="#e8e8e8" stroke-width="1.3" /><polyline points="770.5,262 816.4,262 841.2,264.1 859.8,267.8 880,273 888,276 897,283 905,289 913,295.5 920,300 923,304 928,313 934,323 938,330 943,343 945,348.5 948,366 949.5,380 950.5,395 950.5,408.5" fill="none" stroke="#ffb8f0" stroke-width="1.2" stroke-dasharray="2 1.5"/><line x1="297.5" y1="589" x2="297.5" y2="746" stroke="#525252" stroke-width="1" stroke-dasharray="1 3"/><line x1="315.5" y1="589" x2="315.5" y2="746" stroke="#525252" stroke-width="1" stroke-dasharray="1 3"/><line x1="332.5" y1="589" x2="332.5" y2="746" stroke="#525252" stroke-width="1" stroke-dasharray="1 3"/><line x1="350.5" y1="589" x2="350.5" y2="746" stroke="#525252" stroke-width="1" stroke-dasharray="1 3"/><line x1="367.5" y1="589" x2="367.5" y2="746" stroke="#525252" stroke-width="1" stroke-dasharray="1 3"/><line x1="385.5" y1="589" x2="385.5" y2="746" stroke="#525252" stroke-width="1" stroke-dasharray="1 3"/><line x1="402.5" y1="589" x2="402.5" y2="746" stroke="#525252" stroke-width="1" stroke-dasharray="1 3"/><line x1="420.5" y1="589" x2="420.5" y2="746" stroke="#525252" stroke-width="1" stroke-dasharray="1 3"/><line x1="437.5" y1="589" x2="437.5" y2="746" stroke="#525252" stroke-width="1" stroke-dasharray="1 3"/><line x1="455.5" y1="589" x2="455.5" y2="746" stroke="#525252" stroke-width="1" stroke-dasharray="1 3"/><line x1="472.5" y1="589" x2="472.5" y2="746" stroke="#525252" stroke-width="1" stroke-dasharray="1 3"/><line x1="297" y1="590.5" x2="473" y2="590.5" stroke="#525252" stroke-width="1" stroke-dasharray="1 3"/><line x1="297" y1="612.5" x2="473" y2="612.5" stroke="#525252" stroke-width="1" stroke-dasharray="1 3"/><line x1="297" y1="634.5" x2="473" y2="634.5" stroke="#525252" stroke-width="1" stroke-dasharray="1 3"/><line x1="297" y1="656.5" x2="473" y2="656.5" stroke="#525252" stroke-width="1" stroke-dasharray="1 3"/><line x1="297" y1="678.5" x2="473" y2="678.5" stroke="#525252" stroke-width="1" stroke-dasharray="1 3"/><line x1="297" y1="701.5" x2="473" y2="701.5" stroke="#525252" stroke-width="1" stroke-dasharray="1 3"/><line x1="297" y1="723.5" x2="473" y2="723.5" stroke="#525252" stroke-width="1" stroke-dasharray="1 3"/><line x1="297" y1="745.5" x2="473" y2="745.5" stroke="#525252" stroke-width="1" stroke-dasharray="1 3"/><line x1="286.5" y1="589.6" x2="286.5" y2="746.8" stroke="#fff" stroke-width="1" /><line x1="278" y1="590.5" x2="287" y2="590.5" stroke="#e8e8e8" stroke-width="1.3" /><line x1="278" y1="595.5" x2="287" y2="595.5" stroke="#e8e8e8" stroke-width="1.3" /><line x1="278" y1="601.5" x2="287" y2="601.5" stroke="#e8e8e8" stroke-width="1.3" /><line x1="278" y1="606.5" x2="287" y2="606.5" stroke="#e8e8e8" stroke-width="1.3" /><line x1="278" y1="612.5" x2="287" y2="612.5" stroke="#e8e8e8" stroke-width="1.3" /><line x1="278" y1="617.5" x2="287" y2="617.5" stroke="#e8e8e8" stroke-width="1.3" /><line x1="278" y1="623.5" x2="287" y2="623.5" stroke="#e8e8e8" stroke-width="1.3" /><line x1="278" y1="628.5" x2="287" y2="628.5" stroke="#e8e8e8" stroke-width="1.3" /><line x1="278" y1="634.5" x2="287" y2="634.5" stroke="#e8e8e8" stroke-width="1.3" /><line x1="278" y1="639.5" x2="287" y2="639.5" stroke="#e8e8e8" stroke-width="1.3" /><line x1="278" y1="645.5" x2="287" y2="645.5" stroke="#e8e8e8" stroke-width="1.3" /><line x1="278" y1="650.5" x2="287" y2="650.5" stroke="#e8e8e8" stroke-width="1.3" /><line x1="278" y1="656.5" x2="287" y2="656.5" stroke="#e8e8e8" stroke-width="1.3" /><line x1="278" y1="661.5" x2="287" y2="661.5" stroke="#e8e8e8" stroke-width="1.3" /><line x1="278" y1="667.5" x2="287" y2="667.5" stroke="#e8e8e8" stroke-width="1.3" /><line x1="278" y1="672.5" x2="287" y2="672.5" stroke="#e8e8e8" stroke-width="1.3" /><line x1="278" y1="678.5" x2="287" y2="678.5" stroke="#e8e8e8" stroke-width="1.3" /><line x1="278" y1="683.5" x2="287" y2="683.5" stroke="#e8e8e8" stroke-width="1.3" /><line x1="278" y1="689.5" x2="287" y2="689.5" stroke="#e8e8e8" stroke-width="1.3" /><line x1="278" y1="694.5" x2="287" y2="694.5" stroke="#e8e8e8" stroke-width="1.3" /><line x1="278" y1="700.5" x2="287" y2="700.5" stroke="#e8e8e8" stroke-width="1.3" /><line x1="278" y1="705.5" x2="287" y2="705.5" stroke="#e8e8e8" stroke-width="1.3" /><line x1="278" y1="711.5" x2="287" y2="711.5" stroke="#e8e8e8" stroke-width="1.3" /><line x1="278" y1="716.5" x2="287" y2="716.5" stroke="#e8e8e8" stroke-width="1.3" /><line x1="278" y1="722.5" x2="287" y2="722.5" stroke="#e8e8e8" stroke-width="1.3" /><line x1="278" y1="727.5" x2="287" y2="727.5" stroke="#e8e8e8" stroke-width="1.3" /><line x1="278" y1="733.5" x2="287" y2="733.5" stroke="#e8e8e8" stroke-width="1.3" /><line x1="278" y1="738.5" x2="287" y2="738.5" stroke="#e8e8e8" stroke-width="1.3" /><line x1="278" y1="744.5" x2="287" y2="744.5" stroke="#e8e8e8" stroke-width="1.3" /><line x1="297.3" y1="755.5" x2="472.8" y2="755.5" stroke="#fff" stroke-width="1" /><line x1="297.5" y1="755" x2="297.5" y2="763" stroke="#e8e8e8" stroke-width="1.3" /><line x1="306.5" y1="755" x2="306.5" y2="760" stroke="#e8e8e8" stroke-width="1.3" /><line x1="315.5" y1="755" x2="315.5" y2="763" stroke="#e8e8e8" stroke-width="1.3" /><line x1="324.5" y1="755" x2="324.5" y2="760" stroke="#e8e8e8" stroke-width="1.3" /><line x1="332.5" y1="755" x2="332.5" y2="763" stroke="#e8e8e8" stroke-width="1.3" /><line x1="341.5" y1="755" x2="341.5" y2="760" stroke="#e8e8e8" stroke-width="1.3" /><line x1="350.5" y1="755" x2="350.5" y2="763" stroke="#e8e8e8" stroke-width="1.3" /><line x1="359.5" y1="755" x2="359.5" y2="760" stroke="#e8e8e8" stroke-width="1.3" /><line x1="367.5" y1="755" x2="367.5" y2="763" stroke="#e8e8e8" stroke-width="1.3" /><line x1="376.5" y1="755" x2="376.5" y2="760" stroke="#e8e8e8" stroke-width="1.3" /><line x1="385.5" y1="755" x2="385.5" y2="763" stroke="#e8e8e8" stroke-width="1.3" /><line x1="394.5" y1="755" x2="394.5" y2="760" stroke="#e8e8e8" stroke-width="1.3" /><line x1="402.5" y1="755" x2="402.5" y2="763" stroke="#e8e8e8" stroke-width="1.3" /><line x1="411.5" y1="755" x2="411.5" y2="760" stroke="#e8e8e8" stroke-width="1.3" /><line x1="420.5" y1="755" x2="420.5" y2="763" stroke="#e8e8e8" stroke-width="1.3" /><line x1="429.5" y1="755" x2="429.5" y2="760" stroke="#e8e8e8" stroke-width="1.3" /><line x1="437.5" y1="755" x2="437.5" y2="763" stroke="#e8e8e8" stroke-width="1.3" /><line x1="446.5" y1="755" x2="446.5" y2="760" stroke="#e8e8e8" stroke-width="1.3" /><line x1="455.5" y1="755" x2="455.5" y2="763" stroke="#e8e8e8" stroke-width="1.3" /><line x1="464.5" y1="755" x2="464.5" y2="760" stroke="#e8e8e8" stroke-width="1.3" /><line x1="472.5" y1="755" x2="472.5" y2="763" stroke="#e8e8e8" stroke-width="1.3" /><path d="M384.8,589.5 L389.3,594.5 L384.8,599.5 L380.3,594.5 Z" fill="#d01880" stroke="#ff50c8" stroke-width="1" stroke-dasharray="1 1"/><circle cx="384.8" cy="620.4" r="5" fill="none" stroke="#2a7ad0" stroke-width="1.4" stroke-dasharray="3 1"/><line x1="380.8" y1="637.5" x2="388.8" y2="645" stroke="#90c000" stroke-width="1.2" /><line x1="388.8" y1="637.5" x2="380.8" y2="645" stroke="#90c000" stroke-width="1.2" /><path d="M381.3,655.5 L384.8,662 L388.3,655.5 M382.8,657.5 L386.8,657.5" fill="none" stroke="#e030e0" stroke-width="1.6" stroke-dasharray="2 1"/><path d="M381.8,688.5 Q384.8,684 387.3,688.5 L384.8,691.5 L384.8,695" fill="none" stroke="#1028e8" stroke-width="1.6"/><circle cx="384.8" cy="726" r="4.5" fill="#10d0e0"/><rect x="379" y="731.5" width="10" height="10" fill="#18c818"/><path d="M380.8,744 L388.8,744" stroke="#e0b000" stroke-width="1.5"/><path d="M384.8,744 L384.8,747" stroke="#e02000" stroke-width="1.5"/><defs>
<linearGradient id="press" x1="0" y1="0" x2="0" y2="1"><stop offset="0" stop-color="#b6b6b6"/><stop offset="0.5" stop-color="#c6c6c6"/><stop offset="0.72" stop-color="#dedede"/><stop offset="0.8" stop-color="#eeeeee"/><stop offset="1" stop-color="#f2f2f2"/></linearGradient>
<linearGradient id="redbtn" x1="0" y1="0" x2="0" y2="1"><stop offset="0" stop-color="#d80000"/><stop offset="0.6" stop-color="#c00000"/><stop offset="1" stop-color="#980000"/></linearGradient>
<linearGradient id="info" x1="0" y1="0" x2="0" y2="1"><stop offset="0" stop-color="#3c3c3c"/><stop offset="0.45" stop-color="#555"/><stop offset="0.5" stop-color="#888"/><stop offset="1" stop-color="#999"/></linearGradient>
<linearGradient id="paste" x1="0" y1="0" x2="0" y2="1"><stop offset="0" stop-color="#b85410"/><stop offset="1" stop-color="#e09040"/></linearGradient>
</defs><path d="M39,98 L66,98 L71,103 L71,131 L66,136 L39,136 L34,131 L34,103 Z" fill="url(#press)"/><path d="M430,98 L458,98 L463,103 L463,131 L458,136 L430,136 L425,131 L425,103 Z" fill="url(#press)"/><path d="M956,57 L984,57 L989,62 L989,91 L984,96 L956,96 L951,91 L951,62 Z" fill="url(#press)"/><rect x="38.5" y="66.5" width="22" height="21" fill="#dadada" stroke="#6c6c6c"/><rect x="39" y="67" width="21" height="2.5" fill="#7d8da4"/><path d="M43,80 C43,72 46,72 46,78 C46,86 49,86 49,78 C49,72 52,72 52,78 C52,86 55,86 55,78 C55,73 57,73 57,76" fill="none" stroke="#c45a8a" stroke-width="1.6"/><path d="M55.5,67.5 L65.5,67.5 M60.5,61.5 L60.5,72.5 M57.0,64.0 L64.0,71.0 M64.0,64.0 L57.0,71.0" stroke="#f0a040" stroke-width="1.4"/><path d="M74,73 L84.5,73 L79.25,79.5 Z" fill="#cc0000"/><path d="M126,73 L136.5,73 L131.25,79.5 Z" fill="#cc0000"/><rect x="91.5" y="63.5" width="23" height="22" fill="#d6d6d6" stroke="#6c6c6c" stroke-width="1.2"/><rect x="92" y="64" width="22" height="2.5" fill="#7d8da4"/><path d="M101.5,66 L101.5,85.5 M92,74.5 L114.5,74.5" stroke="#6c6c6c" stroke-width="1.2"/><rect x="102" y="75" width="12.5" height="10.5" fill="#e4e4e4" stroke="#6c6c6c"/><path d="M104,84 C104,78 106,78 106,81 C106,85 108,85 108,81 C108,78 110,78 110,81" fill="none" stroke="#c45a8a" stroke-width="1.2"/><path d="M109.5,74.5 L117.5,74.5 M113.5,69.5 L113.5,78.5 M110.0,71.0 L117.0,78.0 M117.0,71.0 L110.0,78.0" stroke="#f0a040" stroke-width="1.4"/><path d="M144.5,83 L144.5,65.5 Q144.5,64 146,64 L152,64 L154,66.5 L164,66.5 Q165.5,66.5 165.5,68 L165.5,83 Z" fill="#f0a850" stroke="#d08020"/><path d="M147,83.5 L150.5,72.5 L169.5,72.5 L166,83.5 Z" fill="#f4f4f4" stroke="#b0b0b0"/><rect x="187.5" y="65.5" width="19.5" height="21" rx="1" fill="#5578b8" stroke="#3a5a98"/><rect x="190" y="66.5" width="14.5" height="8.5" fill="#f4f4f4"/><rect x="192" y="79" width="11" height="7" fill="#c8d0dc"/><rect x="194" y="80" width="3" height="5" fill="#5578b8"/><rect x="229" y="61.5" width="15" height="12" fill="#ececec" stroke="#a0a0a0"/><rect x="224.5" y="72.5" width="24.5" height="14" rx="3" fill="#e0e0e0" stroke="#8a8a8a"/><path d="M226,80.5 L247.5,80.5" stroke="#9a9a9a" stroke-width="2"/><rect x="263" y="70" width="28" height="21" fill="#000"/><path d="M265,68.5 L275,61.5 L285,68.5" fill="none" stroke="#555" stroke-width="1"/><circle cx="275" cy="61.5" r="2" fill="#222"/><rect x="262" y="68.5" width="27" height="20.5" fill="#f8f8f8" stroke="#c08a28" stroke-width="2.5"/><path d="M265.5,80 C265.5,73 268.5,73 268.5,79 C268.5,86 272,86 272,79 C272,73 275.5,73 275.5,79 C275.5,86 279,86 279,79 C279,73 282.5,73 282.5,79 C282.5,84 285.5,84 285.5,78" fill="none" stroke="#c050c0" stroke-width="1.8"/><path d="M323,72 C331,70 336,76 333,81 C331,84 328,85 326,85.5" fill="none" stroke="#e08a30" stroke-width="3.2"/><path d="M319,72.5 L325.5,66.5 L325.5,78 Z" fill="#e89040"/><path d="M370,74 C362,72 358,78 361,82 C362,84 364,85.5 366,86" fill="none" stroke="#dcdcdc" stroke-width="3.2"/><path d="M373.5,74 L367.5,69.5 L367.5,79 Z" fill="#e2e2e2"/><path d="M398.5,64 L409,80 M411.5,64 L401,80" stroke="#888" stroke-width="3.4"/><path d="M398.5,64 L409,80 M411.5,64 L401,80" stroke="#f4f4f4" stroke-width="2"/><circle cx="401" cy="83" r="3.8" fill="#fff" stroke="#d82010" stroke-width="3"/><circle cx="411" cy="81.5" r="3.8" fill="#fff" stroke="#d82010" stroke-width="3"/><rect x="438.5" y="67.5" width="10" height="14" fill="#ececec" stroke="#cfcfcf"/><rect x="443.5" y="64.5" width="10" height="15" fill="#f2f2f2" stroke="#cfcfcf"/><rect x="475.5" y="65.5" width="18.5" height="20" rx="2" fill="url(#paste)" stroke="#a04808"/><rect x="480.5" y="62.5" width="9" height="5" rx="1" fill="#d8d8d8" stroke="#909090"/><path d="M484.5,72.5 L491.5,72.5 L494.5,75.5 L494.5,85.5 L484.5,85.5 Z" fill="#ececec" stroke="#8c8c8c"/><path d="M518,67 L532.5,82.5 M532.5,67 L518,82.5" stroke="#b04010" stroke-width="4"/><path d="M518,67 L532.5,82.5 M532.5,67 L518,82.5" stroke="#e88050" stroke-width="1.2"/><path d="M571.3770000000001,64.5 L579.823,64.5 L585.9,70.577 L585.9,79.023 L579.823,85.1 L571.3770000000001,85.1 L565.3000000000001,79.023 L565.3000000000001,70.577 Z" fill="#dedede" stroke="#8e8e8e" stroke-width="1.3"/><path d="M567.3000000000001,76.8 L583.9,76.8 L583.9,80.023 L579.823,84.1 L571.3770000000001,84.1 L566.3000000000001,80.023 Z" fill="#c4c4c4"/><path d="M569.6,74.8 L575.6,68.8 L575.6,71.8 L581.6,71.8 L581.6,77.8 L575.6,77.8 L575.6,80.8 Z" fill="#f8f8f8"/><path d="M611.277,64.5 L619.723,64.5 L625.8,70.577 L625.8,79.023 L619.723,85.1 L611.277,85.1 L605.2,79.023 L605.2,70.577 Z" fill="#dedede" stroke="#8e8e8e" stroke-width="1.3"/><path d="M607.2,76.8 L623.8,76.8 L623.8,80.023 L619.723,84.1 L611.277,84.1 L606.2,80.023 Z" fill="#c4c4c4"/><path d="M621.5,74.8 L615.5,68.8 L615.5,71.8 L609.5,71.8 L609.5,77.8 L615.5,77.8 L615.5,80.8 Z" fill="#f8f8f8"/><path d="M656.8,76.8 L662.8,84.8" stroke="#c06010" stroke-width="3.2"/><circle cx="651.8" cy="71.8" r="7.5" fill="#f0f4fa" stroke="#5a7cb0" stroke-width="1.6"/><path d="M646.8,71.8 L656.8,71.8 M651.8,66.8 L651.8,76.8" stroke="#5a86c8" stroke-width="2"/><path d="M696.4,77.2 L702.4,85.2" stroke="#c06010" stroke-width="3.2"/><circle cx="691.4" cy="72.2" r="7.5" fill="#b0c0d8" stroke="#5a6a80" stroke-width="1.6"/><path d="M686.4,72.2 L696.4,72.2 M691.4,67.2 L691.4,77.2" stroke="#fff" stroke-width="3.4"/><path d="M736.4,77.2 L742.4,85.2" stroke="#c06010" stroke-width="3.2"/><circle cx="731.4" cy="72.2" r="7.5" fill="#6a88b8" stroke="#5a6a80" stroke-width="1.6"/><path d="M724.9,71.2 A7,7 0 0 1 737.9,71.2 Z" fill="#f4f4f4"/><path d="M764,72 L764,64 M769,78 L769,62 M774,78 L774,62 M779,78 L779,63 M784,72 L784,65" stroke="#c8c8c8" stroke-width="3.2" stroke-linecap="round"/><path d="M766,74 L784,74 L784,82 Q784,88 776,88 Q768,88 766,82 Z" fill="#d0d0d0" stroke="#b4b4b4"/><path d="M779,85 L787,91" stroke="#a8a8a8" stroke-width="1.5"/><path d="M809.5,73.5 L813.5,77.0 L809.5,80.5 M814.5,73.5 L818.5,77.0 L814.5,80.5" fill="none" stroke="#111" stroke-width="2.2"/><path d="M926.5,73.5 L930.5,77.0 L926.5,80.5 M931.5,73.5 L935.5,77.0 L931.5,80.5" fill="none" stroke="#111" stroke-width="2.2"/><path d="M976,114.5 L980,118.0 L976,121.5 M981,114.5 L985,118.0 L981,121.5" fill="none" stroke="#111" stroke-width="2.2"/><rect x="834.5" y="63.0" width="83" height="27.0" rx="4" fill="#f2f2f2" stroke="#a8a8a8"/><path d="M898,62.5 L914,62.5 Q918,62.5 918,66.5 L918,86.5 Q918,90.5 914,90.5 L898,90.5 Z" fill="url(#redbtn)"/><path d="M903.5,74.0 L912.5,74.0 L908.0,79.5 Z" fill="#fff"/><rect x="285.5" y="103.0" width="87" height="27.5" rx="4" fill="#f2f2f2" stroke="#a8a8a8"/><path d="M352.5,102.5 L369,102.5 Q373,102.5 373,106.5 L373,127 Q373,131 369,131 L352.5,131 Z" fill="url(#redbtn)"/><path d="M358.25,114.25 L367.25,114.25 L362.75,119.75 Z" fill="#fff"/><rect x="876.5" y="102.5" width="91.5" height="28" rx="4" fill="#f2f2f2" stroke="#a8a8a8"/><path d="M948,102 L964.5,102 Q968.5,102 968.5,106 L968.5,127 Q968.5,131 964.5,131 L948,131 Z" fill="url(#redbtn)"/><path d="M953.75,114.0 L962.75,114.0 L958.25,119.5 Z" fill="#fff"/><rect x="957.8" y="71.8" width="2" height="2" fill="#3848a8"/><rect x="974.2" y="63.8" width="2" height="2" fill="#3848a8"/><rect x="982.2" y="63.8" width="2" height="2" fill="#3848a8"/><rect x="974.2" y="71.8" width="2" height="2" fill="#3848a8"/><rect x="982.2" y="71.8" width="2" height="2" fill="#3848a8"/><rect x="957.8" y="81.4" width="2" height="2" fill="#3848a8"/><rect x="974.2" y="81.4" width="2" height="2" fill="#3848a8"/><rect x="982.2" y="81.4" width="2" height="2" fill="#3848a8"/><rect x="957.8" y="89.8" width="2" height="2" fill="#3848a8"/><rect x="974.2" y="89.8" width="2" height="2" fill="#3848a8"/><rect x="982.2" y="89.8" width="2" height="2" fill="#3848a8"/><path d="M39,129 L52,117" stroke="#000" stroke-width="5.5" stroke-linecap="round"/><path d="M52,117 L57,112" stroke="#f0f0f0" stroke-width="4.5"/><path d="M57.5,111 L55,118" stroke="#222" stroke-width="1"/><rect x="47.5" y="103" width="2" height="2" fill="#2050ff"/><rect x="46.5" y="109" width="2" height="2" fill="#2050ff"/><rect x="49" y="109" width="2" height="2" fill="#5070ff"/><rect x="63" y="107.5" width="2" height="2" fill="#ff0000"/><rect x="61.5" y="112.8" width="2" height="2" fill="#ff0000"/><rect x="64.5" y="112.8" width="2" height="2" fill="#ff0000"/><rect x="56" y="116" width="2" height="2" fill="#c040e0"/><rect x="55" y="118.5" width="2" height="2" fill="#c040e0"/><rect x="57.5" y="121" width="2" height="2" fill="#c040e0"/><rect x="60" y="121" width="2" height="2" fill="#c040e0"/><path d="M77,112 L88,106 L96,124 L85,129 Z" fill="#f8f8f8" stroke="#222"/><rect x="85.5" y="105.5" width="12" height="20" fill="#f8f8f8" stroke="#222" transform="rotate(0)"/><path d="M95,105 L106,108.5 L101,127 L90,123.5 Z" fill="#f8f8f8" stroke="#222" stroke-width="1.2"/><rect x="81" y="113" width="2.5" height="2.5" fill="#ff3030"/><rect x="83" y="117" width="2.5" height="2.5" fill="#ff3030"/><rect x="95" y="110" width="2.5" height="2.5" fill="#ff3030"/><rect x="92" y="116" width="2.5" height="2.5" fill="#ff3030"/><rect x="102" y="110" width="2.5" height="2.5" fill="#ff3030"/><rect x="87" y="119" width="2.5" height="2.5" fill="#ff3030"/><path d="M88,112 L92,112 M90,110 L90,114" stroke="#222" stroke-width="1"/><rect x="121.5" y="105.5" width="20" height="10" rx="2" fill="#d4d4d4" stroke="#707070" stroke-width="1.2"/><rect x="122.5" y="106.2" width="18" height="2" fill="#8494a8"/><rect x="121.5" y="117.5" width="20" height="10" rx="2" fill="#d4d4d4" stroke="#707070" stroke-width="1.2"/><rect x="122.5" y="118.2" width="18" height="2" fill="#8494a8"/><rect x="160.5" y="106.5" width="10" height="22" rx="2" fill="#d4d4d4" stroke="#707070" stroke-width="1.2"/><rect x="161.5" y="107.2" width="8" height="2" fill="#8494a8"/><rect x="173.5" y="106.5" width="10" height="22" rx="2" fill="#d4d4d4" stroke="#707070" stroke-width="1.2"/><rect x="174.5" y="107.2" width="8" height="2" fill="#8494a8"/><path d="M394,108 L394,127" stroke="#777" stroke-width="2"/><path d="M395,109.5 C399,108 401,111 404,111.5 C406,112 408,111 410,110.5 L410,123 C407,124 405,124 403,123 C400,122 398,121.5 395,122 Z" fill="#e02828" stroke="#a83020" stroke-width="0.8"/><path d="M436,105.5 L451,105.5 L454.5,109 L454.5,121 L451,124.5 L441,124.5 L436.5,129 L438,124.5 L436,124.5 L432.5,121 L432.5,109 Z" fill="url(#info)" stroke="#e0c020" stroke-width="1.6"/><path d="M446.5,108 L442,122" stroke="#f0f0f0" stroke-width="2.6"/><path d="M488.5,113.2 L496,105.5 L496,109.5 L505.5,109.5 L505.5,117.5 L496,117.5 L496,121.5 Z" fill="#b8b8b8" stroke="#7a7a7a" stroke-width="1"/><path d="M481,119.5 L486,119.5 M486,128 L506,128" stroke="#8a8a8a" stroke-width="1.4"/><path d="M538,113.2 L530.5,105.5 L530.5,109.5 L521,109.5 L521,117.5 L530.5,117.5 L530.5,121.5 Z" fill="#b8b8b8" stroke="#7a7a7a" stroke-width="1"/><path d="M541,119.5 L546,119.5 M520,128 L541,128" stroke="#8a8a8a" stroke-width="1.4"/><rect x="554.5" y="102.5" width="156" height="29" rx="4" fill="#e2e2e2" stroke="#a8a8a8"/><path d="M690,103 L706,103 Q710,103 710,107 L710,127 Q710,131 706,131 L690,131 Z" fill="#c4c4c4"/><path d="M696,114 L704,114 L700,119 Z" fill="#f0f0f0"/><rect x="711.5" y="102.5" width="49" height="29" rx="2" fill="#e6e6e6" stroke="#b8b8b8"/><rect x="779" y="112" width="3.5" height="16" fill="#c2c2c2" stroke="#b0b0b0" stroke-width="0.5"/><rect x="783" y="118" width="3.5" height="10" fill="#c2c2c2" stroke="#b0b0b0" stroke-width="0.5"/><rect x="786" y="106" width="3.5" height="22" fill="#c2c2c2" stroke="#b0b0b0" stroke-width="0.5"/><rect x="790" y="103" width="3.5" height="25" fill="#c2c2c2" stroke="#b0b0b0" stroke-width="0.5"/><rect x="794" y="113" width="3.5" height="15" fill="#c2c2c2" stroke="#b0b0b0" stroke-width="0.5"/><rect x="798" y="117" width="3.5" height="11" fill="#c2c2c2" stroke="#b0b0b0" stroke-width="0.5"/><path d="M776,128.5 L804,128.5" stroke="#a0a0a0" stroke-width="1.5"/><rect x="830" y="103.5" width="19" height="23" fill="#dedede" stroke="#8a8a8a" stroke-width="1.2"/><rect x="832.5" y="106" width="14" height="4" fill="#303030"/><rect x="834" y="107" width="10" height="2" fill="#50d040"/><rect x="832.5" y="112.5" width="2.6" height="3" fill="#f8f8f8" stroke="#888" stroke-width="0.5"/><rect x="836.1" y="112.5" width="2.6" height="3" fill="#f8f8f8" stroke="#888" stroke-width="0.5"/><rect x="839.7" y="112.5" width="2.6" height="3" fill="#f8f8f8" stroke="#888" stroke-width="0.5"/><rect x="843.3" y="112.5" width="2.6" height="3" fill="#f8f8f8" stroke="#888" stroke-width="0.5"/><rect x="832.5" y="116.7" width="2.6" height="3" fill="#f8f8f8" stroke="#888" stroke-width="0.5"/><rect x="836.1" y="116.7" width="2.6" height="3" fill="#f8f8f8" stroke="#888" stroke-width="0.5"/><rect x="839.7" y="116.7" width="2.6" height="3" fill="#f8f8f8" stroke="#888" stroke-width="0.5"/><rect x="843.3" y="116.7" width="2.6" height="3" fill="#f8f8f8" stroke="#888" stroke-width="0.5"/><rect x="832.5" y="120.9" width="2.6" height="3" fill="#f8f8f8" stroke="#888" stroke-width="0.5"/><rect x="836.1" y="120.9" width="2.6" height="3" fill="#f8f8f8" stroke="#888" stroke-width="0.5"/><rect x="839.7" y="120.9" width="2.6" height="3" fill="#f8f8f8" stroke="#888" stroke-width="0.5"/><rect x="843.3" y="120.9" width="2.6" height="3" fill="#f8f8f8" stroke="#888" stroke-width="0.5"/></svg>
<span class="s" style="left:192px;top:110px;font-size:15px;line-height:15px;letter-spacing:0.4px;">Subwindows:</span>
<span class="s" style="left:304px;top:110px;font-size:15px;line-height:15px;">3</span>
<span class="s" style="left:837px;top:70px;font-size:15px;line-height:15px;letter-spacing:0.7px;">family</span>
<span class="s" style="left:879px;top:110px;font-size:15px;line-height:15px;">Classic</span>
<span class="s" style="left:558px;top:110px;font-size:15px;line-height:15px;color:#585858;letter-spacing:0.4px;">Data Point</span>
<div style="left:712px;top:103px;width:48px;height:28px;overflow:hidden">
<span class="s" style="left:-4px;top:7px;font-size:15px;line-height:15px;color:#505050;letter-spacing:0.6px;">53096</span>
</div>
<div style="left:34px;top:147px;width:17px;height:18px;background:#f4f4f4;border:1px solid #888;box-sizing:border-box;box-shadow:1px 1px 0 #bbb"></div>
<svg style="left:34px;top:147px" width="17" height="18"><path d="M3,14 L13,4" stroke="#111" stroke-width="1.3"/><path d="M2.5,15 L14,15" stroke="#111" stroke-width="1.3"/><path d="M2.5,3 L2.5,15" stroke="#111" stroke-width="1.3"/></svg>
<svg style="left:308px;top:150px" width="12" height="12"><path d="M2,2 L10,10 M10,2 L2,10" stroke="#a8a8a8" stroke-width="2.4"/></svg>
<span class="f" style="left:337px;top:350px;font-size:18px;line-height:18px;color:#fff;letter-spacing:0.9px;">1st Order</span>
<span class="f" style="left:324px;top:408px;font-size:18px;line-height:18px;color:#fff;letter-spacing:0.83px;">Port = &quot;/rif&quot;</span>
<span class="f" style="left:209px;top:336px;font-size:18px;line-height:18px;color:#fff;letter-spacing:1.27px;transform:translate(-50%,-50%) rotate(-90deg)">Power (dBm)</span>
<span class="f" style="left:694px;top:334px;font-size:18px;line-height:18px;color:#fff;letter-spacing:1px;transform:translate(-50%,-50%) rotate(-90deg)">(dB)</span>
<span class="f" style="left:221px;top:670px;font-size:18px;line-height:18px;color:#fff;letter-spacing:1.08px;transform:translate(-50%,-50%) rotate(-90deg)">NFdsb (dB)</span>
<span class="f" style="left:221px;top:250px;font-size:18px;line-height:18px;color:#fff;letter-spacing:1.5px;">0.0</span>
<span class="f" style="left:221px;top:309px;font-size:18px;line-height:18px;color:#fff;letter-spacing:0.8px;">-10</span>
<span class="f" style="left:221px;top:357px;font-size:18px;line-height:18px;color:#fff;letter-spacing:0.8px;">-18</span>
<span class="f" style="left:221px;top:404px;font-size:18px;line-height:18px;color:#fff;letter-spacing:0.8px;">-26</span>
<span class="f" style="left:273px;top:450px;font-size:18px;line-height:18px;color:#fff;">-30</span>
<span class="f" style="left:337px;top:450px;font-size:18px;line-height:18px;color:#fff;">-22</span>
<span class="f" style="left:390px;top:450px;font-size:18px;line-height:18px;color:#fff;">-14</span>
<span class="f" style="left:456px;top:450px;font-size:18px;line-height:18px;color:#fff;letter-spacing:0.6px;">-5.0</span>
<span class="f" style="left:340px;top:471px;font-size:18px;line-height:18px;color:#fff;letter-spacing:0.5px;">prf (dBm)</span>
<span class="f" style="left:289px;top:447px;font-size:18px;line-height:18px;color:#fff;letter-spacing:0.72px;">1st Order freq = 4M</span>
<span class="f" style="left:707px;top:251px;font-size:18px;line-height:18px;color:#fff;letter-spacing:0.7px;">14.3</span>
<span class="f" style="left:707px;top:306px;font-size:18px;line-height:18px;color:#fff;letter-spacing:0.7px;">13.4</span>
<span class="f" style="left:707px;top:355px;font-size:18px;line-height:18px;color:#fff;letter-spacing:0.7px;">12.6</span>
<span class="f" style="left:707px;top:406px;font-size:18px;line-height:18px;color:#fff;letter-spacing:0.7px;">11.8</span>
<span class="f" style="left:759px;top:450px;font-size:18px;line-height:18px;color:#fff;">-30</span>
<span class="f" style="left:818px;top:450px;font-size:18px;line-height:18px;color:#fff;">-22</span>
<span class="f" style="left:877px;top:450px;font-size:18px;line-height:18px;color:#fff;">-14</span>
<span class="f" style="left:942px;top:450px;font-size:18px;line-height:18px;color:#fff;letter-spacing:0.6px;">-5.0</span>
<span class="f" style="left:852px;top:471px;font-size:18px;line-height:18px;color:#fff;letter-spacing:0.8px;">prf</span>
<span class="f" style="left:233px;top:583px;font-size:18px;line-height:18px;color:#fff;letter-spacing:1.7px;">16.1</span>
<span class="f" style="left:233px;top:648px;font-size:18px;line-height:18px;color:#fff;letter-spacing:1.7px;">15.5</span>
<span class="f" style="left:233px;top:692px;font-size:18px;line-height:18px;color:#fff;letter-spacing:1.7px;">15.1</span>
<span class="f" style="left:233px;top:737px;font-size:18px;line-height:18px;color:#fff;letter-spacing:1.7px;">14.7</span>
<span class="f" style="left:273px;top:783px;font-size:18px;line-height:18px;color:#fff;letter-spacing:1.5px;">150.0</span>
<span class="f" style="left:344px;top:783px;font-size:18px;line-height:18px;color:#fff;letter-spacing:1.5px;">190.0</span>
<span class="f" style="left:448px;top:783px;font-size:18px;line-height:18px;color:#fff;letter-spacing:1.5px;">250.0</span>
<span class="f" style="left:343px;top:806px;font-size:18px;line-height:18px;color:#fff;letter-spacing:0.58px;">freq (kHz)</span>
</body></html>
